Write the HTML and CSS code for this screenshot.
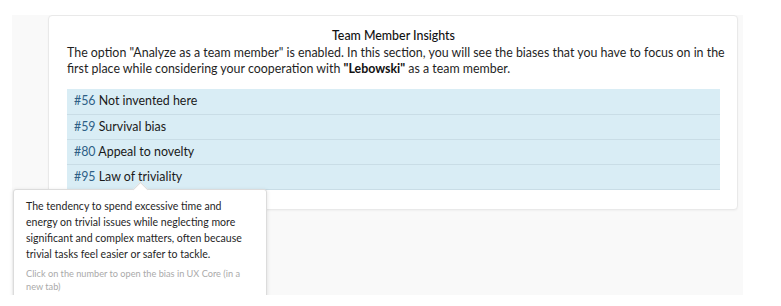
FILE: index.html
```html
<!DOCTYPE html>
<html>
<head>
<meta charset="utf-8">
<title>Team Member Insights</title>
<link rel="stylesheet" href="styles.css">
</head>
<body>
<div class="screen">
	<div class="panel">
		<div class="card">
			<h3 class="title">Team Member Insights</h3>
			<p class="intro">The option "Analyze as a team member" is enabled. In this section, you will see the biases that you have to focus on in the first place while considering your cooperation with <b>"Lebowski"</b> as a team member.</p>
			<ul class="biases">
				<li><a href="#">#56</a> Not invented here</li>
				<li><a href="#">#59</a> Survival bias</li>
				<li><a href="#">#80</a> Appeal to novelty</li>
				<li><a href="#">#95</a> Law of triviality</li>
			</ul>
		</div>
	</div>

	<div class="tip">
		<p>The tendency to spend excessive time and energy on trivial issues while neglecting more significant and complex matters, often because trivial tasks feel easier or safer to tackle.</p>
		<p class="note">Click on the number to open the bias in UX Core (in a new tab)</p>
	</div>
</div>
</body>
</html>
```

FILE: styles.css
```css
*{margin:0; padding:0; list-style:none; box-sizing:border-box;}
body{background:#fff; font-family:Lato, "Open Sans", sans-serif; color:#1f1f1f;}

.screen{position:relative; height:295px; overflow:hidden;}

.panel{margin:15px 0 0 12px; width:731px; height:280px; background:#f9f9f9; padding:0 5px 0 36px;}
.card{background:#fff; border:1px solid #e9e9e9; border-radius:4px; box-shadow:0 1px 2px rgba(0,0,0,.04); padding:12px 17px 19px 18px;}
.card .title{text-align:center; font-size:12.4px; font-weight:500; line-height:16px; color:#111;}
.card .intro{font-size:12.4px; line-height:16px; margin:1px -8px 0 0;}
.card .intro b{font-weight:bold; color:#111;}

.biases{margin-top:12px; background:#d9edf5; border-bottom:1px solid #c9dde6;}
.biases li{height:25px; line-height:24px; padding-left:7px; font-size:12.4px; color:#1a1a1a; border-top:1px solid #c9dde6;}
.biases li:first-child{border-top:none;}
.biases a{color:#2e5f86; text-decoration:none;}

.tip{position:absolute; left:13px; top:189px; width:254px; height:130px; background:#fff; border:1px solid #dcdcdc; border-radius:3px; box-shadow:0 1px 4px rgba(0,0,0,.12); padding:8px 12px;}
.tip:before{content:""; position:absolute; left:121px; top:-6px; width:10px; height:10px; background:#fff; border-left:1px solid #dcdcdc; border-top:1px solid #dcdcdc; transform:rotate(45deg);}
.tip p{font-size:10.55px; line-height:16px; color:#1f1f1f;}
.tip .note{margin-top:6px; font-size:9.2px; line-height:12.5px; color:#aaa;}
```
